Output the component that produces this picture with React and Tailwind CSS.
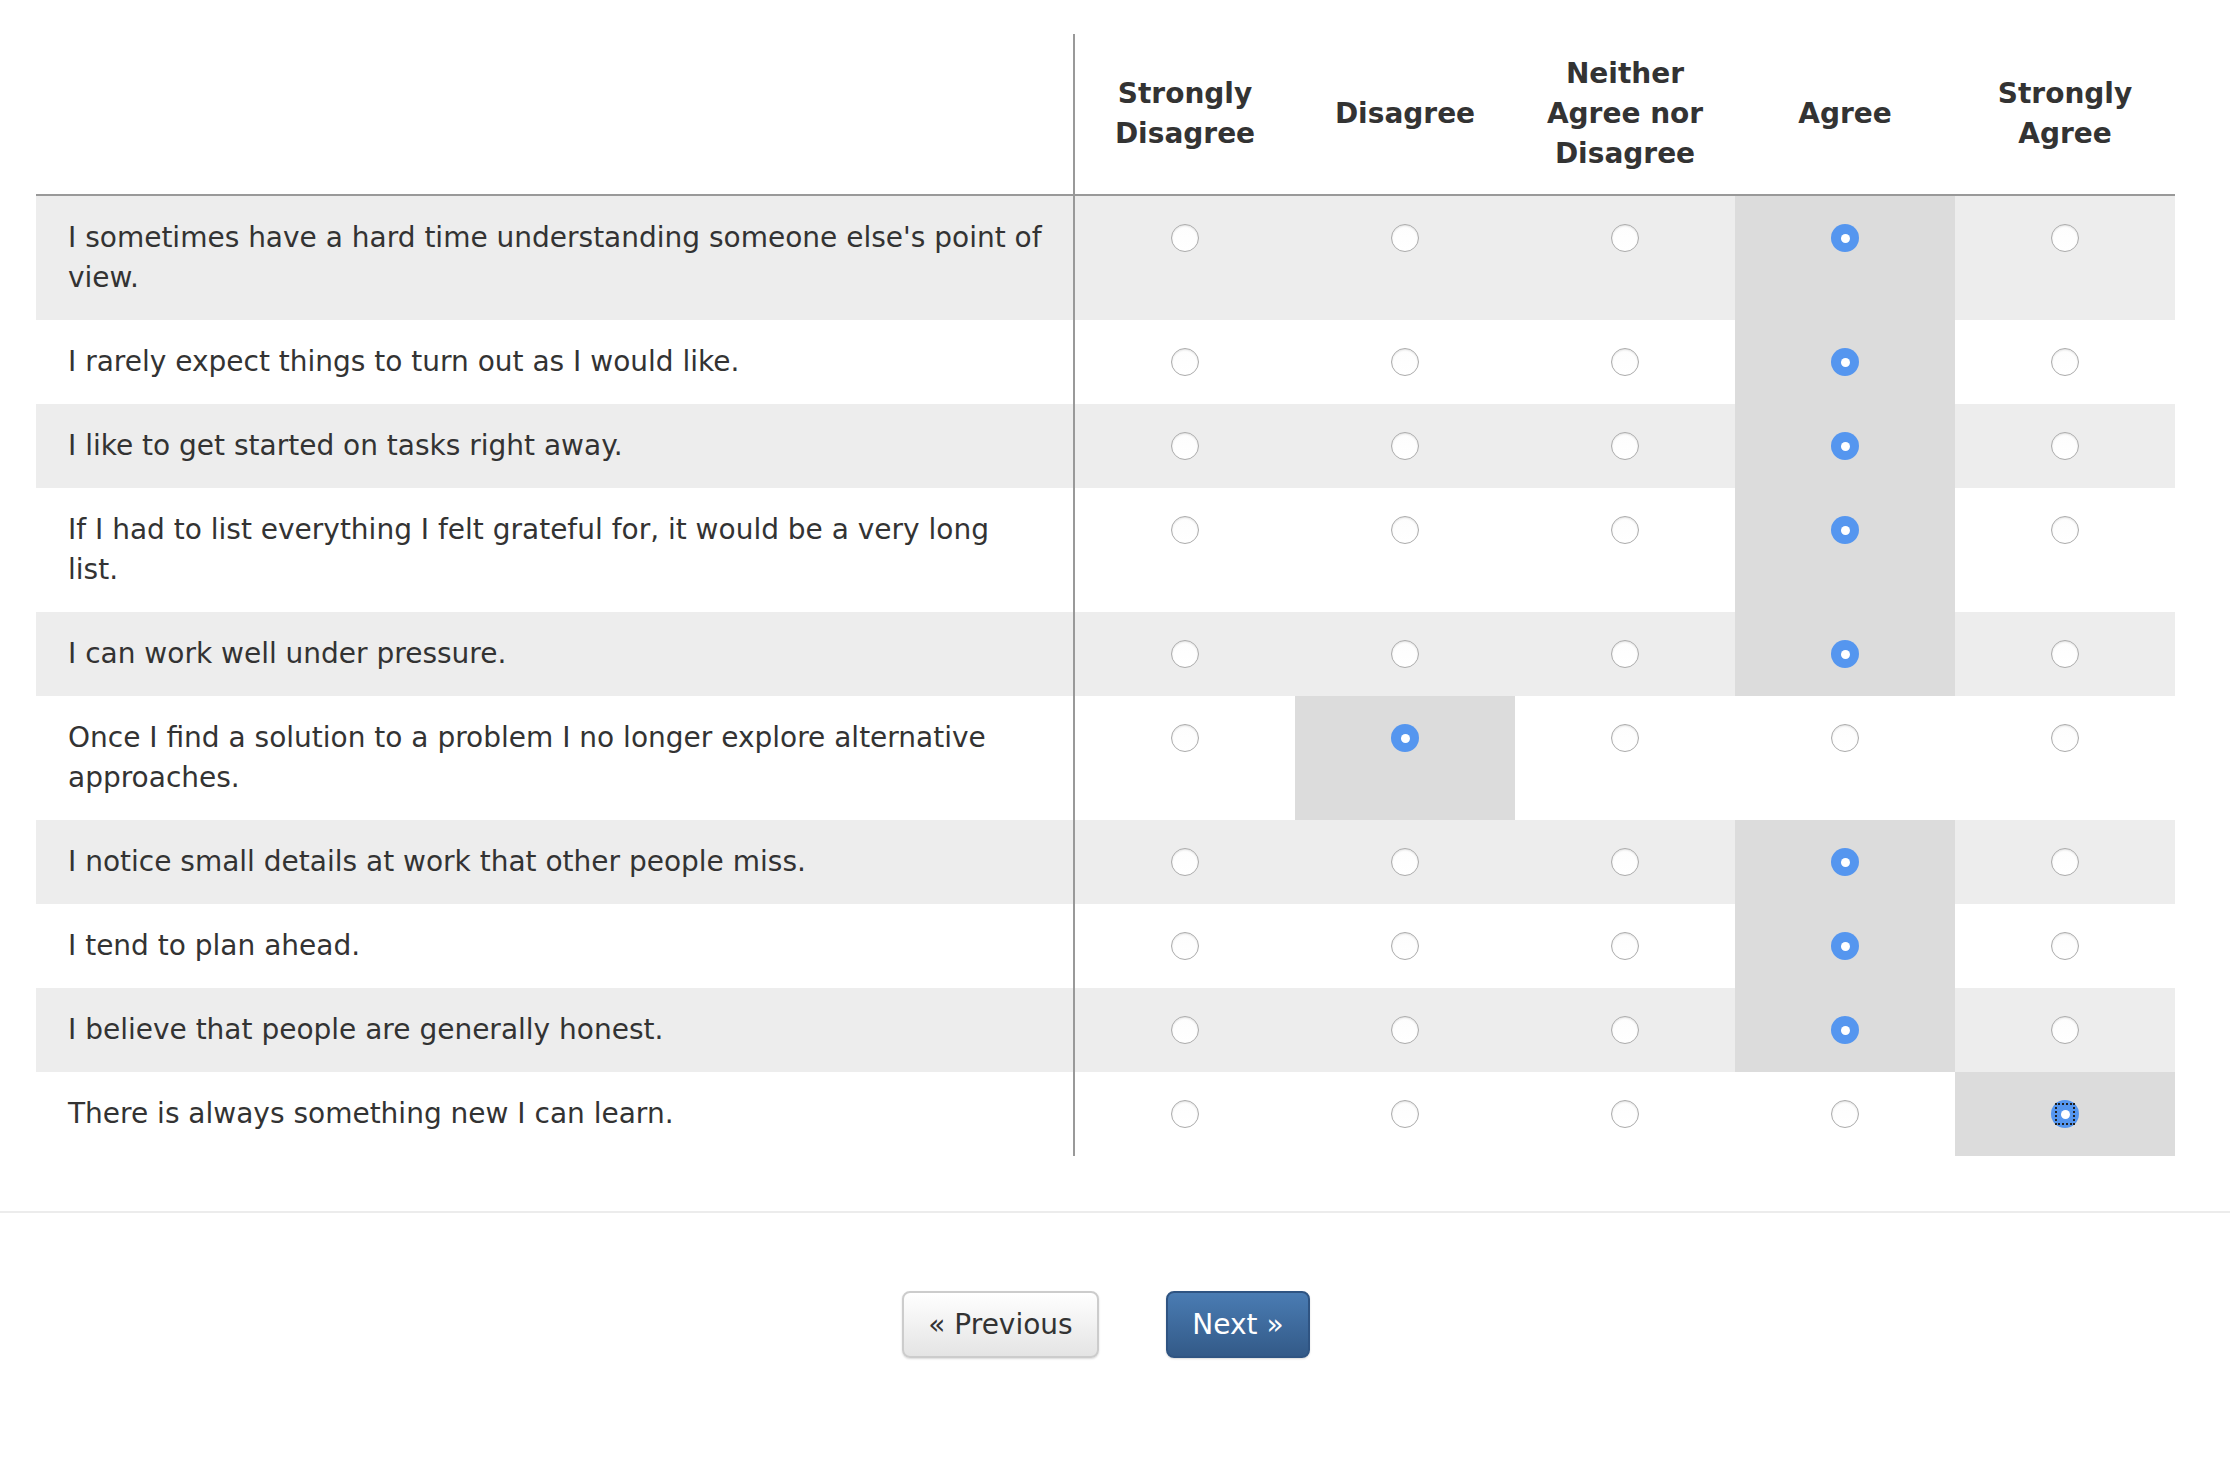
import React from "react";

const questions = [
  { text: "I sometimes have a hard time understanding someone else's point of view.", sel: 3 },
  { text: "I rarely expect things to turn out as I would like.", sel: 3 },
  { text: "I like to get started on tasks right away.", sel: 3 },
  { text: "If I had to list everything I felt grateful for, it would be a very long", rest: "list.", sel: 3 },
  { text: "I can work well under pressure.", sel: 3 },
  { text: "Once I find a solution to a problem I no longer explore alternative approaches.", sel: 1 },
  { text: "I notice small details at work that other people miss.", sel: 3 },
  { text: "I tend to plan ahead.", sel: 3 },
  { text: "I believe that people are generally honest.", sel: 3 },
  { text: "There is always something new I can learn.", sel: 4, focus: true },
];

const headers = [
  ["Strongly", "Disagree"],
  ["Disagree"],
  ["Neither", "Agree nor", "Disagree"],
  ["Agree"],
  ["Strongly", "Agree"],
];

function Radio({ checked, focus }) {
  if (checked) {
    return (
      <div className="relative w-[28px] h-[28px] rounded-full bg-[#5596ef] flex items-center justify-center">
        <div className="w-[9px] h-[9px] rounded-full bg-white" />
        {focus && (
          <div className="absolute left-[4px] top-[3px] w-[20px] h-[22px] border-[2px] border-dotted border-[#222]" />
        )}
      </div>
    );
  }
  return (
    <div className="w-[28px] h-[28px] rounded-full border-[1.5px] border-[#acacac] bg-gradient-to-b from-[#fdfdfd] to-white shadow-[inset_0_1px_2px_rgba(0,0,0,0.12)]" />
  );
}

export default function App() {
  return (
    <div
      className="w-[2230px] min-h-[1466px] bg-white text-[#333]"
      style={{ fontFamily: '"DejaVu Sans", Verdana, sans-serif' }}
    >
      <div className="pl-[36px] pt-[34px]">
        <div className="w-[2139px]">
          {/* header */}
          <div className="grid grid-cols-[1039px_repeat(5,220px)] border-b-[2px] border-[#999]">
            <div className="border-r-[2px] border-[#999] h-[160px]" />
            {headers.map((h, i) => (
              <div
                key={i}
                className="h-[160px] flex flex-col items-center justify-center text-center font-bold text-[28px] leading-[40px] text-[#333]"
              >
                {h.map((l, j) => (
                  <span key={j}>{l}</span>
                ))}
              </div>
            ))}
          </div>
          {/* rows */}
          {questions.map((q, r) => (
            <div
              key={r}
              className={`grid grid-cols-[1039px_repeat(5,220px)] ${r % 2 === 0 ? "bg-[#ededed]" : "bg-white"}`}
            >
              <div className="border-r-[2px] border-[#999] pl-[32px] pr-[22px] py-[22px] text-[28px] leading-[40px] text-[#333]">
                {q.text}
                {q.rest && (
                  <>
                    <br />
                    {q.rest}
                  </>
                )}
              </div>
              {[0, 1, 2, 3, 4].map((c) => (
                <div
                  key={c}
                  className={`flex justify-center pt-[28px] ${q.sel === c ? "bg-[#dcdcdc]" : ""}`}
                >
                  <Radio checked={q.sel === c} focus={q.sel === c && q.focus} />
                </div>
              ))}
            </div>
          ))}
        </div>
      </div>
      <div className="mt-[55px] border-t-[2px] border-[#ececec]" />
      <div className="flex justify-center gap-[67px] pt-[78px] pr-[18px]">
        <button className="w-[197px] h-[67px] rounded-[8px] border-[2px] border-[#cccccc] bg-gradient-to-b from-white to-[#e4e4e4] shadow-[0_1px_2px_rgba(0,0,0,0.15)] text-[28px] text-[#333] flex items-center justify-center">
          « Previous
        </button>
        <button className="w-[144px] h-[67px] rounded-[8px] border-[2px] border-[#2f5482] bg-gradient-to-b from-[#4a7cb3] to-[#335a88] shadow-[0_1px_2px_rgba(0,0,0,0.15)] text-[28px] text-white flex items-center justify-center">
          Next »
        </button>
      </div>
    </div>
  );
}
